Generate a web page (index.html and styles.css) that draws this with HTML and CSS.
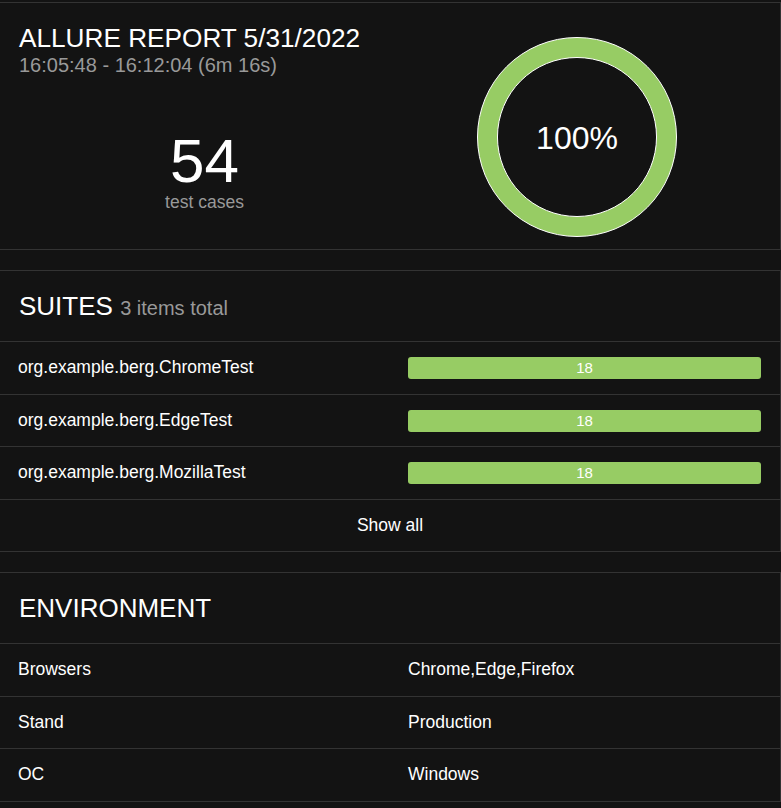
FILE: index.html
```html
<!DOCTYPE html>
<html>
<head>
<meta charset="utf-8">
<link rel="stylesheet" href="styles.css">
</head>
<body>
<div class="page">
  <section class="widget summary">
    <div class="summary-left">
      <div class="summary-head">
        <h2 class="widget-title">ALLURE REPORT 5/31/2022</h2>
        <div class="summary-time">16:05:48 - 16:12:04 (6m 16s)</div>
      </div>
      <div class="summary-stats">
        <div class="summary-count">54</div>
        <div class="summary-label">test cases</div>
      </div>
    </div>
    <div class="summary-right">
      <svg class="donut" width="200" height="200" viewBox="-100 -100 200 200">
        <path class="donut-arc" fill-rule="evenodd" d="M0,-99.5A99.5,99.5 0 1,1 0,99.5A99.5,99.5 0 1,1 0,-99.5ZM0,-79.5A79.5,79.5 0 1,0 0,79.5A79.5,79.5 0 1,0 0,-79.5Z"/>
        <text class="donut-text" x="0" y="12" text-anchor="middle">100%</text>
      </svg>
    </div>
  </section>

  <section class="widget">
    <div class="widget-head">
      <h2 class="widget-title">SUITES <span class="widget-sub">3 items total</span></h2>
    </div>
    <div class="row">
      <div class="cell">org.example.berg.ChromeTest</div>
      <div class="cell cell-bar"><div class="bar">18</div></div>
    </div>
    <div class="row">
      <div class="cell">org.example.berg.EdgeTest</div>
      <div class="cell cell-bar"><div class="bar">18</div></div>
    </div>
    <div class="row">
      <div class="cell">org.example.berg.MozillaTest</div>
      <div class="cell cell-bar"><div class="bar">18</div></div>
    </div>
    <div class="row row-center">Show all</div>
  </section>

  <section class="widget">
    <div class="widget-head">
      <h2 class="widget-title">ENVIRONMENT</h2>
    </div>
    <div class="row">
      <div class="cell">Browsers</div>
      <div class="cell">Chrome,Edge,Firefox</div>
    </div>
    <div class="row">
      <div class="cell">Stand</div>
      <div class="cell">Production</div>
    </div>
    <div class="row">
      <div class="cell">OC</div>
      <div class="cell">Windows</div>
    </div>
  </section>
</div>
</body>
</html>
```

FILE: styles.css
```css
html, body {
  margin: 0;
  padding: 0;
  background: #131313;
}

body {
  font-family: "Liberation Sans", Arial, sans-serif;
  color: #fff;
}

.page {
  padding-top: 2px;
  display: flex;
  flex-direction: column;
  gap: 20px;
}

.widget {
  border-top: 1px solid #333;
  border-bottom: 1px solid #333;
  border-right: 1px solid #333;
  background: #131313;
}

.widget-title {
  margin: 0;
  font-weight: normal;
  font-size: 26px;
  line-height: 30px;
  height: 30px;
  white-space: nowrap;
}

.summary .widget-title {
  font-size: 26.2px;
}

.widget-sub {
  font-size: 20px;
  line-height: 1;
  color: #999;
}

.widget-head {
  padding: 20px 19px;
}

/* summary */
.summary {
  display: flex;
  height: 246px;
}

.summary-left {
  width: 390px;
  display: flex;
  flex-direction: column;
}

.summary-head {
  padding: 20px 19px 0;
}

.summary-time {
  font-size: 20px;
  line-height: 24px;
  color: #999;
}

.summary-stats {
  margin-top: 55px;
  padding-left: 19px;
  text-align: center;
}

.summary-count {
  font-size: 62px;
  line-height: 58px;
}

.summary-label {
  margin-top: 1.5px;
  font-size: 17.5px;
  line-height: 20px;
  color: #999;
}

.summary-right {
  flex: 1;
  display: flex;
  justify-content: center;
  align-items: flex-start;
  padding-top: 34px;
  padding-right: 16px;
}

.donut-arc {
  fill: #97cc64;
  stroke: #fff;
  stroke-width: 1;
}

.donut-text {
  fill: #fff;
  font-family: "Liberation Sans", Arial, sans-serif;
  font-size: 32px;
}

/* rows */
.row {
  display: flex;
  align-items: center;
  height: 51.5px;
  border-top: 1px solid #333;
  font-size: 17.5px;
}

.cell {
  width: 50%;
  padding: 0 19px 0 18px;
  box-sizing: border-box;
}

.cell-bar {
  padding-top: 1px;
}

.bar {
  height: 22px;
  line-height: 22px;
  background: #97cc64;
  border-radius: 3px;
  text-align: center;
  font-size: 15px;
  color: #fff;
}

.row-center {
  justify-content: center;
}
```
